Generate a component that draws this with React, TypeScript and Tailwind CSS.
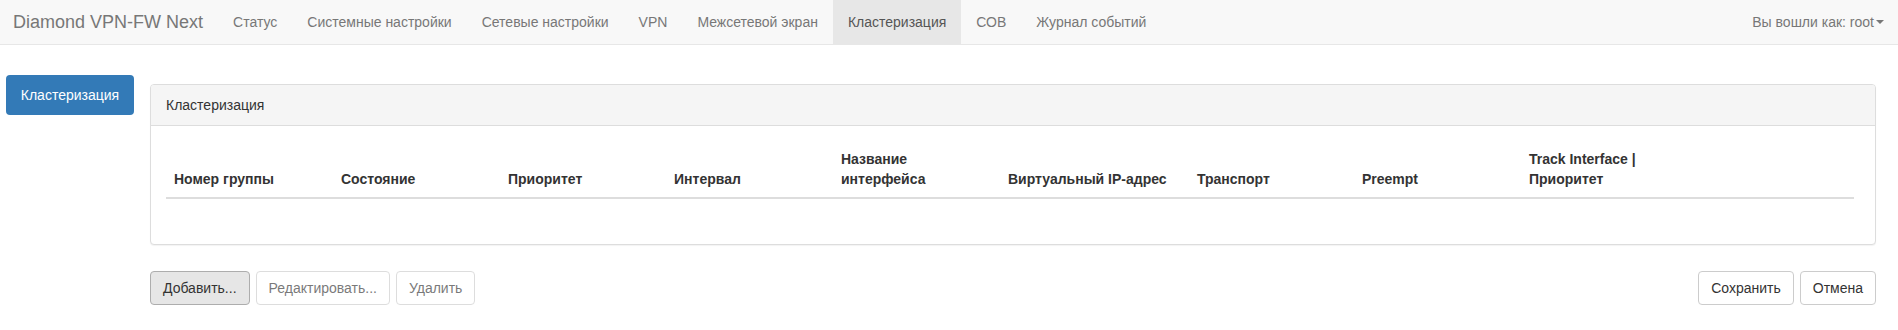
import React from 'react';

const navItems = [
    'Статус',
    'Системные настройки',
    'Сетевые настройки',
    'VPN',
    'Межсетевой экран',
    'Кластеризация',
    'СОВ',
    'Журнал событий',
];

const columns: { title: string; width: string }[] = [
    { title: 'Номер группы', width: 'w-[167px]' },
    { title: 'Состояние', width: 'w-[167px]' },
    { title: 'Приоритет', width: 'w-[166px]' },
    { title: 'Интервал', width: 'w-[167px]' },
    { title: 'Название интерфейса', width: 'w-[167px]' },
    { title: 'Виртуальный IP-адрес', width: 'w-[189px]' },
    { title: 'Транспорт', width: 'w-[165px]' },
    { title: 'Preempt', width: 'w-[167px]' },
    { title: 'Track Interface | Приоритет', width: 'w-[167px]' },
    { title: '', width: '' },
];

export default function App() {
    return (
        <div className="min-h-[330px] bg-white text-[14px] leading-[20px] text-[#333] font-['Liberation_Sans',Arial,sans-serif]">
            {/* верхняя навигация */}
            <nav className="flex h-[45px] items-stretch border-b border-[#e7e7e7] bg-[#f8f8f8]">
                <div className="flex items-center pl-[13px] pr-[15px] text-[18px] text-[#777]">
                    Diamond VPN-FW Next
                </div>
                {navItems.map((item) => (
                    <div
                        key={item}
                        className={
                            item === 'Кластеризация'
                                ? 'flex items-center bg-[#e7e7e7] px-[15px] text-[#555]'
                                : 'flex items-center px-[15px] text-[#777]'
                        }
                    >
                        {item}
                    </div>
                ))}
                <div className="ml-auto flex items-center pr-[14px] text-[#777]">
                    Вы вошли как: root
                    <span className="ml-[2px] inline-block h-0 w-0 border-x-[4px] border-t-[4px] border-x-transparent border-t-[#777]" />
                </div>
            </nav>

            <div className="flex pt-[30px]">
                {/* боковое меню */}
                <div className="ml-[6px] w-[128px] shrink-0">
                    <div className="flex h-[40px] items-center justify-center rounded-[4px] bg-[#337ab7] text-white">
                        Кластеризация
                    </div>
                </div>

                <div className="ml-[16px] mt-[9px] w-[1726px]">
                    <div className="rounded-[4px] border border-[#ddd] bg-white shadow-[0_1px_1px_rgba(0,0,0,0.05)]">
                        <div className="rounded-t-[3px] border-b border-[#ddd] bg-[#f5f5f5] px-[15px] py-[10px]">
                            Кластеризация
                        </div>
                        <div className="pb-[45px] pl-[15px] pr-[21px] pt-[15px]">
                            <table className="w-full table-fixed border-collapse">
                                <thead>
                                    <tr>
                                        {columns.map((col, i) => (
                                            <th
                                                key={i}
                                                className={`${col.width} border-b-2 border-[#ddd] p-[8px] text-left align-bottom font-bold`}
                                            >
                                                {col.title}
                                            </th>
                                        ))}
                                    </tr>
                                </thead>
                                <tbody></tbody>
                            </table>
                        </div>
                    </div>

                    <div className="mt-[26px] flex items-center">
                        <div className="flex gap-[6px]">
                            <button className="h-[34px] rounded-[4px] border border-[#adadad] bg-[#e6e6e6] px-[12px] text-[#333]">
                                Добавить...
                            </button>
                            <button className="h-[34px] rounded-[4px] border border-[#ccc] bg-white px-[12px] text-[#333] opacity-[0.65]">
                                Редактировать...
                            </button>
                            <button className="h-[34px] rounded-[4px] border border-[#ccc] bg-white px-[12px] text-[#333] opacity-[0.65]">
                                Удалить
                            </button>
                        </div>
                        <div className="ml-auto flex gap-[6px]">
                            <button className="h-[34px] rounded-[4px] border border-[#ccc] bg-white px-[12px] text-[#333]">
                                Сохранить
                            </button>
                            <button className="h-[34px] rounded-[4px] border border-[#ccc] bg-white px-[12px] text-[#333]">
                                Отмена
                            </button>
                        </div>
                    </div>
                </div>
            </div>
        </div>
    );
}
